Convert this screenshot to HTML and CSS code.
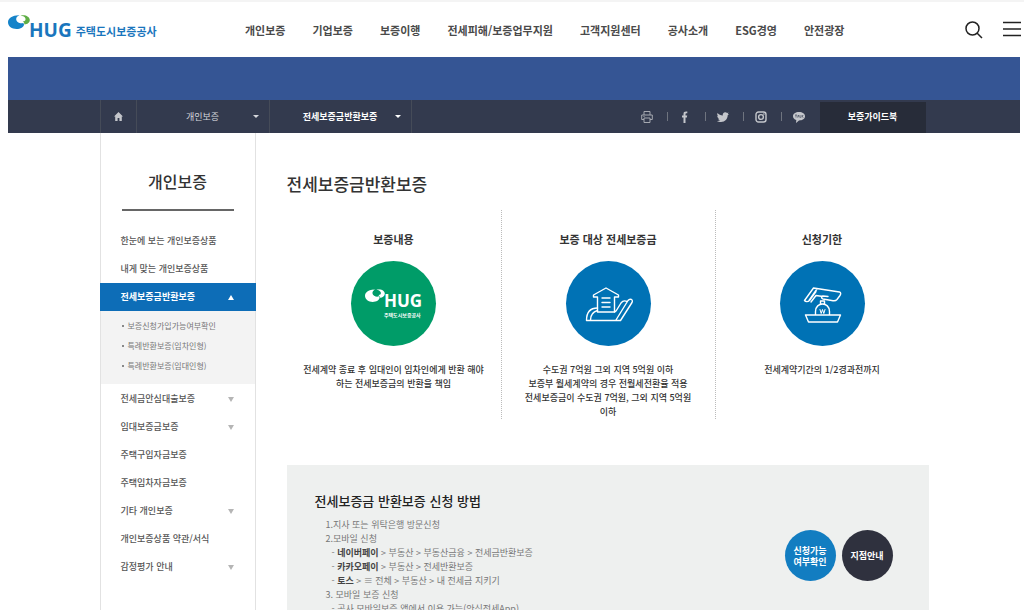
FILE: index.html
```html
<!DOCTYPE html>
<html lang="ko">
<head>
<meta charset="utf-8">
<meta name="viewport" content="width=device-width, initial-scale=1">
<title>전세보증금반환보증 - HUG 주택도시보증공사</title>
<link rel="stylesheet" href="styles.css">
</head>
<body>
<svg class="defs" aria-hidden="true">
  <symbol id="mark" viewBox="0 0 22 15">
    <path d="M11.500.3C5 0 0 3 0 7.300 0 11.500 4 14 8.500 14c4 0 7.500-2 7.500-4.500 0-.8-.4-1.300-1-1.600C13 9 8.500 7.500 8.200 4.500 8 2.500 9.500 1 11.500.3z"/>
  </symbol>
  <symbol id="leaf" viewBox="0 0 22 15">
    <path d="M12.500.5C17-.8 21.800 1.500 21.800 5c0 2.500-2.300 4.300-5.300 4.500-.2-1.500-.8-2.500-1.800-3.200 1.700.2 3-.8 2.800-2.500C17.300 2 15 .8 12.500.5z"/>
  </symbol>
</svg>
<header class="header">
  <a class="logo" href="#">
    <svg class="logo-mark" viewBox="0 0 22 15" aria-hidden="true"><use class="blue" href="#mark"/><use class="green" href="#leaf"/></svg>
    <span class="logo-hug">HUG</span>
    <span class="logo-name">주택도시보증공사</span>
  </a>
  <nav class="nav">
    <a href="#">개인보증</a>
    <a href="#">기업보증</a>
    <a href="#">보증이행</a>
    <a href="#">전세피해/보증업무지원</a>
    <a href="#">고객지원센터</a>
    <a href="#">공사소개</a>
    <a href="#">ESG경영</a>
    <a href="#">안전광장</a>
  </nav>
  <div class="tools">
    <button type="button" aria-label="검색"><svg width="18" height="18" viewBox="0 0 18 18"><circle cx="7.5" cy="7.5" r="6.5"/><path d="M12 12l5 5"/></svg></button>
    <button type="button" aria-label="전체메뉴"><svg width="18" height="18" viewBox="0 0 18 18"><path d="M0 1.500h18M0 8h18M0 14.500h18"/></svg></button>
  </div>
</header>
<div class="page">
  <div class="banner"></div>
  <div class="bar">
    <div class="container bar-inner">
      <a class="home" href="#" aria-label="홈"><svg width="9" height="9" viewBox="0 0 9 9"><path d="M4.500 0L9 4.500H7.800V9H5.400V6H3.600v3H1.200V4.500H0z"/></svg></a>
      <button type="button" class="crumb">개인보증<i class="caret"></i></button>
      <button type="button" class="crumb crumb-current">전세보증금반환보증<i class="caret"></i></button>
      <div class="share">
        <a href="#" aria-label="인쇄"><svg class="line" width="12" height="12" viewBox="0 0 12 12"><path d="M3 4V.5h6V4M3 8.500H.7V4h10.600v4.500H9M3 7h6v4.500H3zM2.500 5.500h1"/></svg></a>
        <a href="#" aria-label="페이스북"><svg width="12" height="12" viewBox="0 0 12 12"><path d="M4.500 12V6.500H3v-2h1.500V3C4.500 1 5.600.3 8.300.6v1.600C7 2.100 6.500 2.300 6.500 3.200v1.300h1.700l-.3 2H6.500V12z"/></svg></a>
        <a href="#" aria-label="트위터"><svg width="12" height="12" viewBox="0 0 12 12"><path d="M12 3l-1.300 1.300C10.700 8 8 11 4 11 2.500 11 1 10.600 0 9.900c1.200.1 2.400-.2 3.300-.9-1 0-1.900-.7-2.200-1.600h1C1 7.100.2 6.200.2 5l1 .3C.2 4.500 0 3.200.5 2c1.300 1.500 3 2.300 5.300 2.500C5.400 2.700 6.600 1.300 8.300 1.300c.7 0 1.300.3 1.800.8l1.500-.5-.9 1.400z"/></svg></a>
        <a href="#" aria-label="인스타그램"><svg class="line bold" width="12" height="12" viewBox="0 0 12 12"><rect x="1" y="1" width="10" height="10" rx="2.500"/><circle cx="6" cy="6" r="2.400"/><circle cx="8.800" cy="3.200" r=".2"/></svg></a>
        <a href="#" aria-label="카카오톡"><svg width="12" height="12" viewBox="0 0 12 12"><path d="M6 1c3.500 0 6 1.700 6 4.200S9.500 9.400 6 9.400L3 12l.3-3C1.300 8.400 0 7 0 5.200 0 2.700 2.500 1 6 1z"/><path class="cut" d="M2 4h2M3 4v2.500M4.500 6.500L5.300 4l.8 2.500M7 4v2.300h1M9 4v2.500M10.300 4L9.200 5.200l1.100 1.300"/></svg></a>
      </div>
      <a class="guide" href="#">보증가이드북</a>
    </div>
  </div>
  <div class="container body">
    <aside class="side">
      <h2>개인보증</h2>
      <ul class="menu">
        <li><a href="#">한눈에 보는 개인보증상품</a></li>
        <li><a href="#">내게 맞는 개인보증상품</a></li>
        <li class="active"><a href="#">전세보증금반환보증<i class="caret up"></i></a>
          <ul class="submenu">
            <li><a href="#">보증신청가입가능여부확인</a></li>
            <li><a href="#">특례반환보증(임차인형)</a></li>
            <li><a href="#">특례반환보증(임대인형)</a></li>
          </ul>
        </li>
        <li><a href="#">전세금안심대출보증<i class="caret gray"></i></a></li>
        <li><a href="#">임대보증금보증<i class="caret gray"></i></a></li>
        <li><a href="#">주택구입자금보증</a></li>
        <li><a href="#">주택임차자금보증</a></li>
        <li><a href="#">기타 개인보증<i class="caret gray"></i></a></li>
        <li><a href="#">개인보증상품 약관/서식</a></li>
        <li><a href="#">감정평가 안내<i class="caret gray"></i></a></li>
      </ul>
    </aside>
    <main class="main">
      <h1>전세보증금반환보증</h1>
      <div class="cards">
        <section class="card">
          <h3>보증내용</h3>
          <div class="disc disc-green">
            <div class="disc-logo">
              <svg viewBox="0 0 22 15" width="20" height="14" aria-hidden="true"><use href="#mark"/><use href="#leaf"/></svg>
              <div class="disc-words"><b>HUG</b><small>주택도시보증공사</small></div>
            </div>
          </div>
          <p>전세계약 종료 후 임대인이 임차인에게 반환 해야<br>하는 전세보증금의 반환을 책임</p>
        </section>
        <section class="card">
          <h3>보증 대상 전세보증금</h3>
          <div class="disc">
            <svg class="art" viewBox="0 0 84 84" aria-hidden="true">
              <path d="M31.500 50V35h-4v-2L40 26l12.500 7v2h-4v15M31.500 50h17M36 36h8M36 40.500h8M36 45h8"/>
              <path d="M20.500 58.500h34L66 40.500c1.500-3-2-4.500-4-2L50 58M20.500 58.500c0-7 3-12.500 11-12.500M24.500 58c0-5 2-8 7-9.500M48.500 50c1-.5 2-1.500 2.500-2.500l4-6.500c1.500-2 4-2.500 6-1.500"/>
            </svg>
          </div>
          <p>수도권 7억원 그외 지역 5억원 이하<br>보증부 월세계약의 경우 전월세전환율 적용<br>전세보증금이 수도권 7억원, 그외 지역 5억원<br>이하</p>
        </section>
        <section class="card">
          <h3>신청기한</h3>
          <div class="disc">
            <svg class="art" viewBox="0 0 84 84" aria-hidden="true">
              <path d="M24.500 38.500l9-12.500 26 4c1.500.3 1.500 2 .5 3.500l-3 4c-1 1.200-2 1.500-4 1.200l-10-1.700c-2-.4-2-3 0-3l5 .5M24.500 38.500c1 1.500 3.500 1.500 5 0l6.500-9M31 40l5-6.500 7 1M37 27l-8 11.500"/>
              <path d="M40.500 39h4v3h-4zM35.500 53v-3.500c0-10 14-10 14 0V53M25.500 53h35l-3 7h-29z"/>
              <path class="won" d="M40 47.500l1.200 4 1.300-4 1.300 4 1.200-4"/>
            </svg>
          </div>
          <p>전세계약기간의 1/2경과전까지</p>
        </section>
      </div>
      <section class="apply">
        <div class="apply-text">
          <h3>전세보증금 반환보증 신청 방법</h3>
          <ul class="steps">
            <li>1.지사 또는 위탁은행 방문신청</li>
            <li>2.모바일 신청
              <ul>
                <li>- <b>네이버페이</b> &gt; 부동산 &gt; 부동산금융 &gt; 전세금반환보증</li>
                <li>- <b>카카오페이</b> &gt; 부동산 &gt; 전세반환보증</li>
                <li>- <b>토스</b> &gt; ≡ 전체 &gt; 부동산 &gt; 내 전세금 지키기</li>
              </ul>
            </li>
            <li>3. 모바일 보증 신청
              <ul>
                <li>- 공사 모바일보증 앱에서 이용 가능(안심전세App)</li>
              </ul>
            </li>
          </ul>
        </div>
        <div class="apply-links">
          <a class="round" href="#">신청가능<br>여부확인</a>
          <a class="round round-dark" href="#">지점안내</a>
        </div>
      </section>
    </main>
  </div>
</div>
</body>
</html>
```
FILE: styles.css
```css
* { box-sizing: border-box; margin: 0; padding: 0; }
body {
  height: 100vh;
  overflow: hidden;
  border-top: 2px solid #f4f4f4;
  background: #fff;
  color: #333;
  font: 9px/14px "Noto Sans CJK KR", sans-serif;
  word-break: keep-all;
}
a { color: inherit; text-decoration: none; }
ul { list-style: none; }
button { border: 0; background: none; font: inherit; color: inherit; cursor: pointer; }
.defs { display: block; width: 0; height: 0; }

.header { display: flex; align-items: center; height: 55px; padding: 0 3px 0 8px; }
.logo { display: flex; align-items: center; flex: 0 0 237px; color: #1a76bd; }
.logo-mark { width: 22px; height: 15px; margin-bottom: 14px; }
.blue { fill: #1583c9; }
.green { fill: #5fae45; }
.logo-hug { margin: 0 4px 0 -1px; font: 700 19px/26px "Noto Sans", sans-serif; }
.logo-name { padding-top: 3px; font-size: 11px; font-weight: 700; }
.nav { display: flex; gap: 27px; font-size: 11px; font-weight: 700; color: #4a4a4a; white-space: nowrap; }
.tools { display: flex; gap: 20px; margin-left: auto; }
.tools svg { display: block; fill: none; stroke: #222; stroke-width: 1.5; }

.page { padding: 0 4px 0 8px; }
.container { max-width: 829px; margin: 0 auto; }
.banner { height: 43px; background: #355594; }
.bar { background: #333a4e; }
.bar-inner { display: flex; height: 33px; padding-right: 3px; color: #d5d7dc; border-left: 1px solid #454b58; }
.home { display: flex; align-items: center; justify-content: center; width: 36px; border-right: 1px solid #454b58; }
.home svg { fill: #c4c6cb; }
.crumb { position: relative; width: 133px; border-right: 1px solid #454b58; }
.crumb-current { width: 142px; color: #fff; font-weight: 700; }
.caret { border: solid transparent; border-width: 3px 3px 0; border-top-color: currentColor; }
.crumb .caret { position: absolute; right: 10px; top: 15px; }
.share { display: flex; align-items: center; margin-left: auto; margin-right: 15px; }
.share a { display: flex; align-items: center; }
.share a + a::before { content: ""; width: 1px; height: 9px; margin: 0 11px 0 14px; background: #6f747f; }
.share svg { fill: #c4c6cb; }
.share .line { fill: none; stroke: #a5a8b0; }
.share .bold { stroke: #c4c6cb; stroke-width: 1.4; }
.share .cut { fill: none; stroke: #333a4e; stroke-width: 0.6; }
.guide { width: 106px; margin-top: 2px; background: #272c39; color: #fff; font-weight: 700; line-height: 29px; text-align: center; }

.body { display: flex; gap: 31px; }
.side { flex: 0 0 156px; height: 100vh; border: solid #e2e2e2; border-width: 0 1px; }
.side h2 { margin: 0 21px 16px; padding: 36px 0 16px; border-bottom: 2px solid #666; font-size: 16px; font-weight: 500; line-height: 24px; text-align: center; }
.menu a { display: flex; align-items: center; justify-content: space-between; height: 28px; padding: 0 21px 0 20px; color: #555; font-weight: 500; }
.menu .caret { border-width: 5px 3px 0; }
.menu .gray { border-top-color: #b5b5b5; }
.menu .up { border-width: 0 3px 5px; border-bottom-color: #fff; }
.menu .active > a { margin: 0 -1px; padding: 0 22px 0 21px; background: #0d6db7; color: #fff; font-weight: 700; }
.menu .submenu { margin-bottom: 1px; padding: 5px 0 8px; background: #f3f3f3; }
.menu .submenu a { justify-content: flex-start; gap: 4px; height: 20px; padding-left: 21px; color: #777; font-size: 8px; font-weight: 400; }
.submenu a::before { content: ""; width: 2px; height: 2px; background: #888; }

.main { flex: 1; min-width: 0; padding-top: 38px; }
h1 { font-size: 17px; font-weight: 500; line-height: 26px; }
.cards { display: grid; grid-template-columns: repeat(3, 1fr); min-height: 208px; margin-top: 13px; }
.card { padding-top: 21px; text-align: center; }
.card + .card { border-left: 1px dotted #bbb; }
.card h3 { font-size: 11px; line-height: 16px; }
.card p { margin-top: 17px; color: #333; font-weight: 500; white-space: nowrap; }
.disc { display: grid; place-items: center; width: 85px; height: 85px; margin: 14px auto 0; border-radius: 50%; background: #0072b5; }
.disc-green { background: #009c68; }
.disc-logo { display: flex; color: #fff; }
.disc-logo svg { fill: #fff; }
.disc-words { display: flex; flex-direction: column; align-items: flex-start; margin: 2px 0 0 -1px; }
.disc-words b { font: 700 17px/20px "Noto Sans", sans-serif; }
.disc-words small { font-size: 5px; line-height: 8px; font-weight: 700; }
.art { width: 84px; height: 84px; fill: none; stroke: #fff; stroke-width: 1.4; stroke-linejoin: round; stroke-linecap: round; }
.won { stroke-width: 1; }

.apply { display: flex; justify-content: space-between; margin-top: 46px; padding: 26px 36px 60px 28px; background: #eef0ef; }
.apply h3 { font-size: 13px; font-weight: 500; line-height: 20px; color: #222; }
.steps { margin: 7px 0 0 11px; color: #777; }
.steps ul { margin-left: 6px; }
.steps b { color: #444; }
.apply-links { display: flex; gap: 6px; padding-top: 39px; }
.round { display: grid; place-content: center; width: 51px; height: 51px; border-radius: 50%; background: #127dc1; color: #fff; font-weight: 700; line-height: 11px; text-align: center; }
.round-dark { background: #2f313e; }
```
